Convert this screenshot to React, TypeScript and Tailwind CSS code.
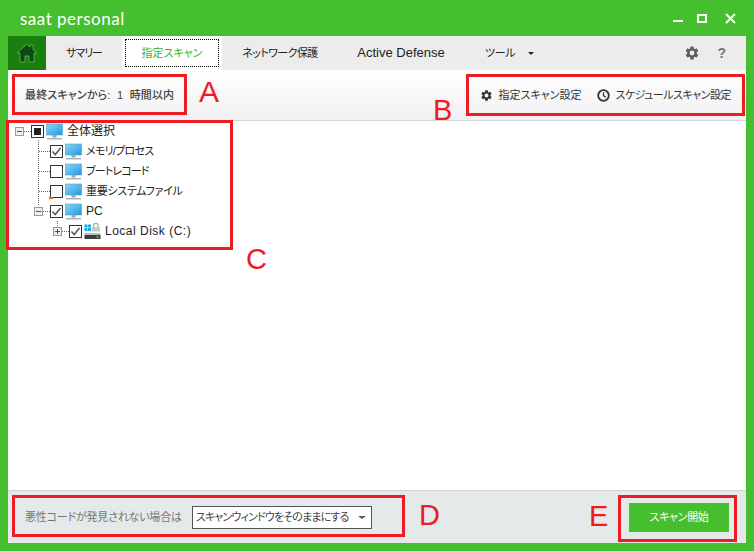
import type { ReactNode } from "react";

const jp = "font-['Liberation_Sans','Noto_Sans_CJK_JP',sans-serif] [font-feature-settings:'palt'] whitespace-nowrap";
const gearPath =
  "M19.14 12.94a7.5 7.5 0 0 0 0-1.88l2.03-1.58a.5.5 0 0 0 .12-.64l-1.92-3.32a.5.5 0 0 0-.6-.22l-2.39.96a7 7 0 0 0-1.62-.94l-.36-2.54a.5.5 0 0 0-.5-.42h-3.84a.5.5 0 0 0-.48.42l-.36 2.54a7.4 7.4 0 0 0-1.62.94l-2.39-.96a.5.5 0 0 0-.6.22L2.7 8.84a.5.5 0 0 0 .12.64l2.03 1.58a7.5 7.5 0 0 0 0 1.88l-2.03 1.58a.5.5 0 0 0-.12.64l1.92 3.32c.13.22.39.3.6.22l2.39-.96c.5.38 1.04.7 1.62.94l.36 2.54c.05.24.25.42.48.42h3.84c.24 0 .44-.18.48-.42l.36-2.54a7 7 0 0 0 1.62-.94l2.39.96c.22.08.47 0 .6-.22l1.92-3.32a.5.5 0 0 0-.12-.64zM12 15.6a3.6 3.6 0 1 1 0-7.2 3.6 3.6 0 0 1 0 7.2z";

function Monitor() {
  return (
    <svg width="17" height="17" viewBox="0 0 17 17" className="shrink-0">
      <defs>
        <linearGradient id="scr" x1="0" y1="0" x2="1" y2="1">
          <stop offset="0" stopColor="#8ed6f7" />
          <stop offset="1" stopColor="#1f9be0" />
        </linearGradient>
      </defs>
      <rect x="0.5" y="1" width="16" height="11" fill="url(#scr)" stroke="#5a9cc4" strokeWidth="0.6" />
      <rect x="6.5" y="12" width="4" height="2.5" fill="#9aa7b0" />
      <rect x="1" y="15" width="15" height="1.4" fill="#a3b0ba" />
    </svg>
  );
}

function DiskIcon() {
  return (
    <svg width="17" height="17" viewBox="0 0 17 17" className="shrink-0">
      <rect x="0.5" y="1.5" width="3" height="3" fill="#1ea7e8" />
      <rect x="4" y="1.5" width="3" height="3" fill="#1ea7e8" />
      <rect x="0.5" y="5" width="3" height="3" fill="#1ea7e8" />
      <rect x="4" y="5" width="3" height="3" fill="#1ea7e8" />
      <path d="M9.5 4V2.6a2.3 2.3 0 0 1 4.6 0V4" fill="none" stroke="#a8a8a8" strokeWidth="1.2" />
      <rect x="8" y="4" width="8" height="4.5" fill="#c9c9c9" />
      <rect x="0.5" y="10" width="16" height="2" fill="#bdbdbd" />
      <rect x="0.5" y="12" width="16" height="4" fill="#3d3d3d" />
      <rect x="12.5" y="13" width="2" height="2" fill="#43c32d" />
    </svg>
  );
}

function Check({ state }: { state: "on" | "off" | "mixed" }) {
  return (
    <span className="flex h-[13px] w-[13px] shrink-0 items-center justify-center border border-[#333] bg-white">
      {state === "on" && (
        <svg width="11" height="11" viewBox="0 0 11 11">
          <path d="M1.5 5.5 4.2 8.5 9.5 2" fill="none" stroke="#555" strokeWidth="1.5" />
        </svg>
      )}
      {state === "mixed" && <span className="h-[7px] w-[7px] bg-[#222]" />}
    </span>
  );
}

function Expander({ open }: { open: boolean }) {
  return (
    <span className="relative flex h-[9px] w-[9px] shrink-0 items-center justify-center border border-[#999] bg-[#eeeeee]">
      <span className="h-px w-[5px] bg-[#3a4f86]" />
      {!open && <span className="absolute h-[5px] w-px bg-[#3a4f86]" />}
    </span>
  );
}

function Row({ pad, expander, dots, state, icon, text = "text-[11px]", children }: { pad: number; expander?: boolean | "open"; dots: string; state: "on" | "off" | "mixed"; icon: ReactNode; text?: string; children: ReactNode }) {
  return (
    <div className="flex h-[20px] items-center" style={{ paddingLeft: pad }}>
      {expander !== undefined && <Expander open={expander === "open"} />}
      <span className={`${dots} border-t border-dotted border-[#666]`} />
      <Check state={state} />
      <span className="ml-[2px]">{icon}</span>
      <span className={`ml-[4px] leading-none text-[#222] ${text} ${jp}`}>{children}</span>
    </div>
  );
}

function Tree() {
  return (
    <div className="relative flex-1 bg-white">
      <span className="absolute left-[30px] top-[19px] h-[65px] border-l border-dotted border-[#666]" />
      <span className="absolute left-[49px] top-[100px] h-[5px] border-l border-dotted border-[#666]" />
      <span className="absolute left-[41px] top-[76px] h-[2px] w-[4px] bg-[#e8682a]" />
      <Row pad={7} expander="open" dots="w-[7px]" state="mixed" icon={<Monitor />} text="text-[12px]">全体選択</Row>
      <Row pad={31} dots="w-[11px]" state="on" icon={<Monitor />} text="text-[11px] tracking-[-0.75px]">メモリ/プロセス</Row>
      <Row pad={31} dots="w-[11px]" state="off" icon={<Monitor />} text="text-[11px] tracking-[-0.85px]">ブートレコード</Row>
      <Row pad={31} dots="w-[11px]" state="off" icon={<Monitor />} text="text-[11px] tracking-[-0.3px]">重要システムファイル</Row>
      <Row pad={26} expander="open" dots="w-[7px]" state="on" icon={<Monitor />} text="text-[12px]">PC</Row>
      <Row pad={45} expander={false} dots="w-[7px]" state="on" icon={<DiskIcon />} text="text-[12px] tracking-[0.5px]">Local Disk (C:)</Row>
    </div>
  );
}

function Nav() {
  const plain = `flex h-full items-center justify-center text-[#222] ${jp}`;
  return (
    <div className="flex h-[34px] items-center bg-[#ececec]">
      <div className="flex h-full w-[38px] items-center justify-center bg-[#1a7f0f]">
        <svg width="22" height="20" viewBox="0 0 22 20">
          <path d="M11 1 1 10h3v9h5v-6h4v6h5v-9h3l-4-3.6V2h-3v2.1z" fill="#0c4a12" stroke="#5fbf4f" strokeWidth="0.8" />
        </svg>
      </div>
      <div className={`${plain} w-[76px] text-[11px] tracking-[-1px]`}>サマリー</div>
      <div className="flex h-full w-[100px] bg-white p-[3px]">
        <div className={`flex flex-1 items-center justify-center border border-dotted border-black text-[11px] text-[#34b81c] ${jp}`}>指定スキャン</div>
      </div>
      <div className={`${plain} w-[116px] text-[11px] tracking-[-0.6px]`}>ネットワーク保護</div>
      <div className={`${plain} w-[126px] text-[13px]`}>Active Defense</div>
      <div className={`${plain} ml-[21px] text-[11px] tracking-[-0.4px]`}>ツール</div>
      <span className="ml-[13px] mt-[1px] h-0 w-0 border-x-[3px] border-t-[3px] border-x-transparent border-t-[#222]" />
      <div className="ml-auto flex items-center gap-[17px] pr-[20px]">
        <svg width="16" height="16" viewBox="0 0 24 24" fill="#5c5c5c">
          <path d={gearPath} />
        </svg>
        <span className="font-['Liberation_Sans',sans-serif] text-[14px] font-bold leading-none text-[#777]">?</span>
      </div>
    </div>
  );
}

export default function App() {
  return (
    <div className="relative flex h-[551px] w-[754px] flex-col overflow-hidden bg-[#45bf2e]">
      <div className="flex h-[36px] shrink-0 items-center justify-between pl-[20px] pr-[18px]">
        <span className="font-['Lato',sans-serif] text-[17px] font-normal leading-none tracking-[0.5px] text-white">saat personal</span>
        <div className="flex items-center">
          <span className="mt-[6px] h-[2px] w-[10px] bg-white" />
          <span className="ml-[14px] h-[9px] w-[10px] border-2 border-white" />
          <svg width="11" height="11" viewBox="0 0 11 11" className="ml-[18px]">
            <path d="M1 1l9 9M10 1l-9 9" stroke="#fff" strokeWidth="2" />
          </svg>
        </div>
      </div>

      <div className="mx-[8px] flex flex-1 flex-col">
        <Nav />
        <div className="flex h-[51px] items-center justify-between border-b border-[#d6d6d6] bg-gradient-to-b from-white to-[#f0f0f2] pl-[17px] pr-[15px]">
          <span className={`mt-[1px] whitespace-pre text-[11px] font-medium tracking-[0.15px] text-[#444] ${jp}`}>最終スキャンから:  1  時間以内</span>
          <div className="flex items-center text-[#333]">
            <svg width="13" height="13" viewBox="0 0 24 24" fill="#333">
              <path d={gearPath} />
            </svg>
            <span className={`ml-[5px] text-[11px] ${jp}`}>指定スキャン設定</span>
            <svg width="13" height="13" viewBox="0 0 13 13" className="ml-[16px]">
              <circle cx="6.5" cy="6.5" r="5.3" fill="none" stroke="#333" strokeWidth="1.8" />
              <path d="M6.5 3.2v3.5l2.3 1.4" fill="none" stroke="#333" strokeWidth="1.3" />
            </svg>
            <span className={`ml-[5px] text-[11px] tracking-[-0.5px] ${jp}`}>スケジュールスキャン設定</span>
          </div>
        </div>

        <Tree />

        <div className="flex h-[53px] items-center border-t border-[#cfd3d3] bg-[#e4e9e9] pl-[17px] pr-[17px]">
          <span className={`text-[11px] tracking-[-0.2px] text-[#777] ${jp}`}>悪性コードが発見されない場合は</span>
          <div className="ml-[10px] flex h-[23px] w-[180px] items-center justify-between border border-[#555] bg-white pl-[3px] pr-[4px]">
            <span className={`text-[11px] tracking-[-0.85px] text-[#444] ${jp}`}>スキャンウィンドウをそのままにする</span>
            <span className="mr-[1px] h-0 w-0 border-x-[4px] border-t-[3px] border-x-transparent border-t-[#555]" />
          </div>
          <button className={`ml-auto flex h-[29px] w-[100px] items-center justify-center bg-[#45bf2e] text-[11px] tracking-[-0.3px] text-white ${jp}`}>スキャン開始</button>
        </div>
      </div>
      <div className="h-[8px] shrink-0" />

      <div className="absolute left-[12px] top-[74px] h-[41px] w-[175px] border-[3px] border-[#ed1c24]" />
      <div className="absolute left-[466px] top-[74px] h-[42px] w-[279px] border-[3px] border-[#ed1c24]" />
      <div className="absolute left-[6px] top-[120px] h-[130px] w-[227px] border-[3px] border-[#ed1c24]" />
      <div className="absolute left-[12px] top-[495px] h-[42px] w-[393px] border-[3px] border-[#ed1c24]" />
      <div className="absolute left-[618px] top-[495px] h-[47px] w-[119px] border-[3px] border-[#ed1c24]" />

      <span className="absolute left-[199px] top-[74px] font-['Liberation_Sans',sans-serif] text-[30px] leading-[36px] text-[#ed1c24]">A</span>
      <span className="absolute left-[433px] top-[92px] font-['Liberation_Sans',sans-serif] text-[29px] leading-[36px] text-[#ed1c24]">B</span>
      <span className="absolute left-[246px] top-[241px] font-['Liberation_Sans',sans-serif] text-[29px] leading-[36px] text-[#ed1c24]">C</span>
      <span className="absolute left-[419px] top-[497px] font-['Liberation_Sans',sans-serif] text-[29px] leading-[36px] text-[#ed1c24]">D</span>
      <span className="absolute left-[589px] top-[498px] font-['Liberation_Sans',sans-serif] text-[29px] leading-[36px] text-[#ed1c24]">E</span>
    </div>
  );
}
